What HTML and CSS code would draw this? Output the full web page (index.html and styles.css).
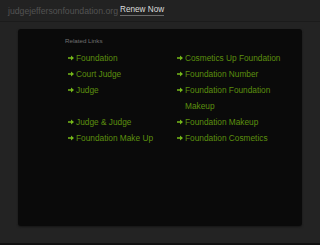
FILE: index.html
```html
<!DOCTYPE html>
<html lang="en">

<head>
    <meta charset="UTF-8">
    <meta name="viewport" content="width=device-width, initial-scale=1.0">
    <title>judgejeffersonfoundation.org</title>
    <link rel="stylesheet" href="styles.css">
</head>

<body>
    <div class="topbar">
        <span class="domain">judgejeffersonfoundation.org</span>
        <a class="renew" href="#">Renew Now</a>
    </div>

    <div class="box">
        <div class="related">Related Links</div>
        <div class="links">
            <a class="link" href="#"><svg class="arrow" viewBox="0 0 6 6"><path d="M0 2.2h3V0.6L6 3 3 5.4V3.8H0z" /></svg>Foundation</a>
            <a class="link" href="#"><svg class="arrow" viewBox="0 0 6 6"><path d="M0 2.2h3V0.6L6 3 3 5.4V3.8H0z" /></svg>Cosmetics Up Foundation</a>
            <a class="link" href="#"><svg class="arrow" viewBox="0 0 6 6"><path d="M0 2.2h3V0.6L6 3 3 5.4V3.8H0z" /></svg>Court Judge</a>
            <a class="link" href="#"><svg class="arrow" viewBox="0 0 6 6"><path d="M0 2.2h3V0.6L6 3 3 5.4V3.8H0z" /></svg>Foundation Number</a>
            <a class="link" href="#"><svg class="arrow" viewBox="0 0 6 6"><path d="M0 2.2h3V0.6L6 3 3 5.4V3.8H0z" /></svg>Judge</a>
            <a class="link" href="#"><svg class="arrow" viewBox="0 0 6 6"><path d="M0 2.2h3V0.6L6 3 3 5.4V3.8H0z" /></svg>Foundation Foundation Makeup</a>
            <a class="link" href="#"><svg class="arrow" viewBox="0 0 6 6"><path d="M0 2.2h3V0.6L6 3 3 5.4V3.8H0z" /></svg>Judge &amp; Judge</a>
            <a class="link" href="#"><svg class="arrow" viewBox="0 0 6 6"><path d="M0 2.2h3V0.6L6 3 3 5.4V3.8H0z" /></svg>Foundation Makeup</a>
            <a class="link" href="#"><svg class="arrow" viewBox="0 0 6 6"><path d="M0 2.2h3V0.6L6 3 3 5.4V3.8H0z" /></svg>Foundation Make Up</a>
            <a class="link" href="#"><svg class="arrow" viewBox="0 0 6 6"><path d="M0 2.2h3V0.6L6 3 3 5.4V3.8H0z" /></svg>Foundation Cosmetics</a>
        </div>
    </div>

    <div class="footer"></div>
</body>

</html>
```

FILE: styles.css
```css
body {
    margin: 0;
    height: 245px;
    overflow: hidden;
    background: #232323;
    font-family: "Liberation Sans", Arial, sans-serif;
}

.topbar {
    height: 21px;
    display: flex;
    align-items: center;
    padding-left: 8px;
    gap: 2px;
    background: #222;
    border-bottom: 1px solid #1b1b1b;
}

.domain {
    font-size: 8.7px;
    color: #525252;
}

.renew {
    font-size: 8.2px;
    color: #dcdcdc;
    text-decoration: none;
    border-bottom: 1px solid #6a6a6a;
    line-height: 10px;
}

.box {
    margin: 7px 18px 0;
    height: 197px;
    box-sizing: border-box;
    padding: 7px 0 0 47px;
    background: #0a0a0a;
    border-radius: 3px;
    box-shadow: 0 1px 2px #151515;
}

.related {
    font-size: 6.2px;
    line-height: 10px;
    color: #707070;
    margin-bottom: 4px;
}

.links {
    display: grid;
    grid-template-columns: 109px 112px;
    padding-left: 3px;
}

.link {
    display: block;
    font-size: 8.3px;
    line-height: 16px;
    color: #5c8f0e;
    text-decoration: none;
    padding-left: 8px;
    position: relative;
}

.arrow {
    position: absolute;
    left: 0;
    top: 5px;
    width: 6px;
    height: 6px;
    fill: #76b81a;
}

.footer {
    margin-top: 17px;
    height: 2px;
    background: #111;
}
```
